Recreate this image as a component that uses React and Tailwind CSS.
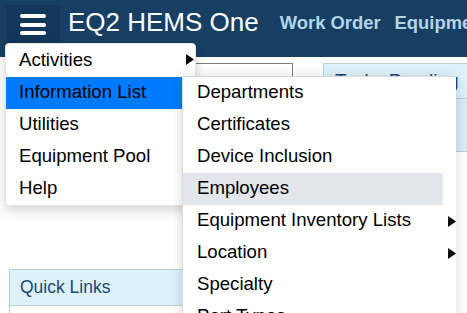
import React from "react";

function Arrow() {
  return (
    <svg width="8" height="11" viewBox="0 0 8 11" className="shrink-0">
      <polygon points="0,0 8,5.5 0,11" fill="#000" />
    </svg>
  );
}

const mainItems = [
  { label: "Activities", arrow: true },
  { label: "Information List", active: true },
  { label: "Utilities" },
  { label: "Equipment Pool" },
  { label: "Help" },
];

const subItems = [
  { label: "Departments" },
  { label: "Certificates" },
  { label: "Device Inclusion" },
  { label: "Employees", hover: true },
  { label: "Equipment Inventory Lists", arrow: true },
  { label: "Location", arrow: true },
  { label: "Specialty" },
  { label: "Part Types" },
];

export default function App() {
  return (
    <div className="relative w-[467px] h-[313px] overflow-hidden bg-white font-['Liberation_Sans',Arial,sans-serif]">
      {/* Header */}
      <header className="flex items-start h-[57px] bg-[#163f63] whitespace-nowrap overflow-hidden">
        <button className="shrink-0 ml-[6px] mt-[5px] h-[38px] w-[54px] rounded-[3px] bg-[#12375a] flex flex-col items-center justify-center gap-[4.5px] pt-[1px]">
          <span className="block w-[26px] h-[4px] rounded-full bg-white" />
          <span className="block w-[26px] h-[4px] rounded-full bg-white" />
          <span className="block w-[26px] h-[4px] rounded-full bg-white" />
        </button>
        <div className="shrink-0 ml-[8px] mt-[7px] text-[26px] leading-[30px] text-white">EQ2 HEMS One</div>
        <nav className="shrink-0 flex gap-[14px] ml-[21px] mt-[12px] text-[18.4px] leading-[22px] font-bold text-[#b5d3e7]">
          <span>Work Order</span>
          <span>Equipment</span>
        </nav>
      </header>

      {/* Body content */}
      <div className="flex pt-[6px]">
        <div className="w-[323px] shrink-0 pl-[9px]">
          <div className="ml-[90px] w-[194px] h-[34px] border border-[#7d7d7d] bg-white" />
          <div className="mt-[172px] w-[300px] border border-[#b9cfdc]">
            <div className="h-[36px] bg-[#ddf1fb] border-b border-[#b9cfdc] flex items-center pl-[10px] pb-[1px] text-[17.5px] text-[#1c4a6d]">
              Quick Links
            </div>
            <div className="h-[20px] bg-white" />
          </div>
        </div>
        <div className="w-[170px] shrink-0 border border-[#b9cfdc] border-r-0 self-start">
          <div className="h-[35px] bg-[#ddf1fb] border-b border-[#b9cfdc] flex items-center pl-[11px] text-[19px] text-[#1c4a6d] whitespace-nowrap">
            Tasks Pending
          </div>
          <div className="h-[52px] bg-[#d8ecf6]" />
        </div>
      </div>

      {/* Main dropdown menu */}
      <div className="absolute left-[5px] top-[43px] w-[191px] pt-[1px] bg-white rounded-[4px] border border-[#e4e4e4] shadow-[0_4px_12px_rgba(0,0,0,0.18)] text-[18.6px] text-black whitespace-nowrap">
        {mainItems.map((it) => (
          <div
            key={it.label}
            className={
              "h-[32px] flex items-center justify-between pl-[13px] pr-[1px] pb-[3px] " +
              (it.active ? "bg-[#007bff]" : "")
            }
          >
            <span>{it.label}</span>
            {it.arrow && <Arrow />}
          </div>
        ))}
      </div>

      {/* Sub menu */}
      <div className="absolute left-[182px] top-[76px] w-[274px] h-[250px] bg-white border-l border-t border-[#dcdcdc] shadow-[0_2px_12px_rgba(0,0,0,0.16)] text-[18.6px] text-black whitespace-nowrap overflow-hidden">
        {subItems.map((it) => (
          <div key={it.label} className="h-[32px] flex items-center">
            <div
              className={
                "w-[260px] h-full flex items-center pl-[14px] pb-[3px] " +
                (it.hover ? "bg-[#e3e6ea]" : "")
              }
            >
              {it.label}
            </div>
            {it.arrow && (
              <span className="ml-[5px] flex">
                <Arrow />
              </span>
            )}
          </div>
        ))}
      </div>
    </div>
  );
}
